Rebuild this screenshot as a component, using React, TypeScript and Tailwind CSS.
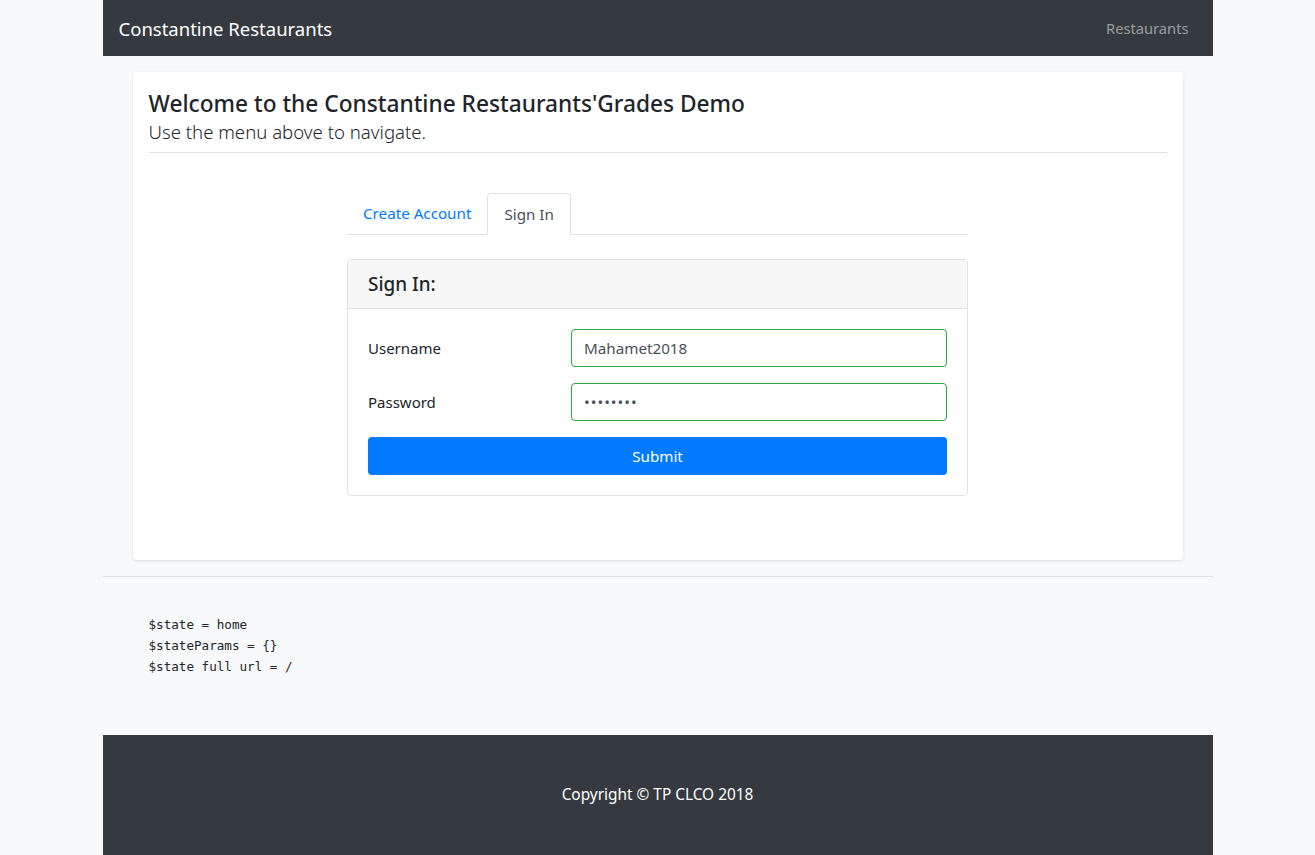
export default function App() {
  const sans = { fontFamily: '"Noto Sans", "Open Sans", sans-serif' };
  return (
    <div className="min-h-[855px] bg-[#f8f9fa] text-[#212529]" style={sans}>
      <div className="mx-auto w-[1110px]">
        <nav className="flex h-[56px] items-center justify-between bg-[#343a40] pl-4 pr-6 pt-[1px]">
          <span className="text-[18.5px] text-white">Constantine Restaurants</span>
          <span className="text-[14.7px] text-[rgba(255,255,255,0.5)]">Restaurants</span>
        </nav>

        <div className="px-[30px] pt-4">
          <div className="rounded-[4px] bg-white px-4 pt-[17px] pb-[64px] shadow-[0_1px_3px_rgba(0,0,0,0.12)]">
            <h4 className="text-[22.7px] font-medium leading-[29px]">
              Welcome to the Constantine Restaurants'Grades Demo
            </h4>
            <p className="text-[18.6px] font-light leading-[28px]">Use the menu above to navigate.</p>
            <hr className="mt-[6px] border-t border-[#dee2e6]" />

            <div className="mx-auto mt-10 w-[621px]">
              <div className="flex border-b border-[#dee2e6] text-[15.2px]">
                <span className="mb-[-1px] px-4 py-2 leading-[24px] text-[#007bff]">Create Account</span>
                <span className="mb-[-1px] rounded-t-[4px] border border-[#dee2e6] border-b-white bg-white px-4 py-2 leading-[24px] text-[#495057]">
                  Sign In
                </span>
              </div>

              <div className="mt-6 rounded-[4px] border border-[#dee2e6]">
                <div className="h-[49px] border-b border-[#dee2e6] bg-[#f7f7f7] px-5 py-[10px] text-[18.9px] font-medium leading-[28px]">
                  Sign In:
                </div>
                <div className="p-5">
                  <div className="flex items-center">
                    <label className="w-[203px] text-[15px]">Username</label>
                    <div className="flex h-[38px] flex-1 items-center rounded-[4px] border border-[#28a745] px-3 text-[15.2px] text-[#495057]">
                      Mahamet2018
                    </div>
                  </div>
                  <div className="mt-4 flex items-center">
                    <label className="w-[203px] text-[15px]">Password</label>
                    <div className="flex h-[38px] flex-1 items-center rounded-[4px] border border-[#28a745] px-3 text-[15.2px] tracking-[1px] text-[#495057]">
                      ••••••••
                    </div>
                  </div>
                  <button className="mt-4 flex h-[38px] w-full items-center justify-center rounded-[4px] bg-[#007bff] text-[15.2px] text-white">
                    Submit
                  </button>
                </div>
              </div>
            </div>
          </div>
        </div>

        <hr className="mt-4 border-t border-[#dee2e6]" />

        <pre
          className="px-[46px] pt-[37px] pb-[58px] text-[12.6px] leading-[21px] text-[#212529]"
          style={{ fontFamily: '"DejaVu Sans Mono", "Liberation Mono", monospace' }}
        >
{`$state = home
$stateParams = {}
$state full url = /`}
        </pre>

        <footer className="flex h-[120px] items-center justify-center bg-[#343a40] text-[15.4px] text-white">
          Copyright © TP CLCO 2018
        </footer>
      </div>
    </div>
  );
}
